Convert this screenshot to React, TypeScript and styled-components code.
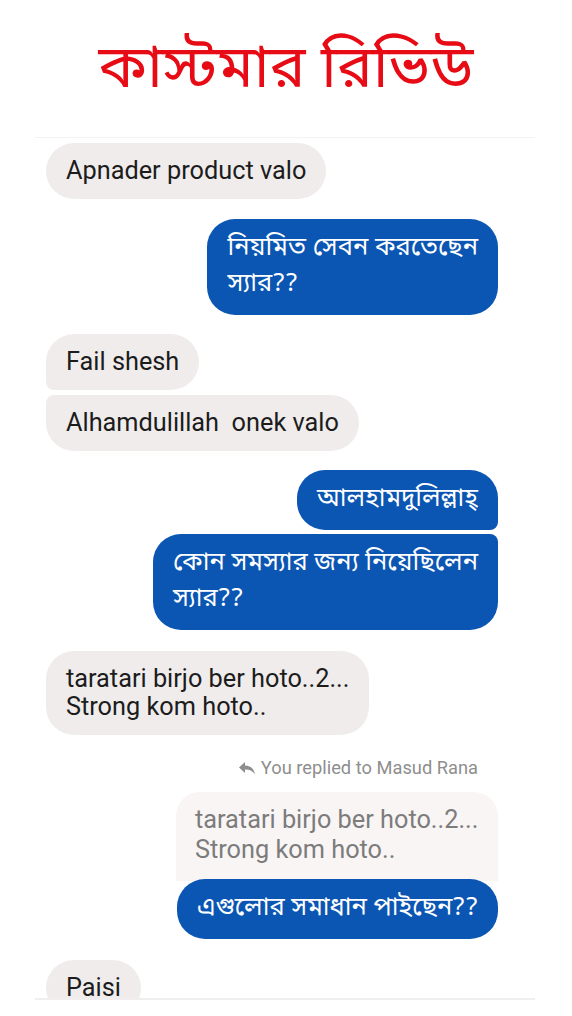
import React from "react";
import styled, { createGlobalStyle } from "styled-components";

const GlobalStyle = createGlobalStyle`
  body {
    margin: 0;
    background: #ffffff;
    font-family: Roboto, "Noto Sans", "Noto Sans Bengali", sans-serif;
  }
`;

const Page = styled.div`
  width: 572px;
  height: 1016px;
  overflow: hidden;
  background: #fff;
`;

const Title = styled.h1`
  margin: 0;
  height: 137px;
  padding-top: 32px;
  box-sizing: border-box;
  text-align: center;
  color: #e60b14;
  font-size: 60px;
  line-height: 80px;
  font-weight: 400;
  font-family: "Noto Sans Bengali", "Noto Sans", sans-serif;
`;

const Chat = styled.div`
  margin: 0 37px 0 35px;
  border-top: 1px solid #f3f3f3;
  border-bottom: 2px solid #f0eeee;
  padding: 5px 37px 0 11px;
  height: 855px;
  overflow: hidden;
  display: flex;
  flex-direction: column;
`;

const Row = styled.div<{ $mine?: boolean; $gap?: number }>`
  display: flex;
  justify-content: ${(p) => (p.$mine ? "flex-end" : "flex-start")};
  margin-top: ${(p) => p.$gap ?? 0}px;
`;

const Bubble = styled.div<{ $mine?: boolean; $corners?: string; $max?: number }>`
  background: ${(p) => (p.$mine ? "#0b56b3" : "#f0ecec")};
  color: ${(p) => (p.$mine ? "#fff" : "#1c1c1c")};
  border-radius: ${(p) => p.$corners ?? "28px"};
  padding: ${(p) => (p.$mine ? "12px 20px" : "14px 20px")};
  font-size: ${(p) => (p.$mine ? "25.5px" : "25.3px")};
  line-height: ${(p) => (p.$mine ? "36px" : "28px")};
  font-family: ${(p) =>
    p.$mine
      ? `"Noto Sans Bengali", "Noto Sans", sans-serif`
      : `Roboto, "Noto Sans", sans-serif`};
  white-space: pre-wrap;
  max-width: ${(p) => p.$max ?? 330}px;
`;

const ReplyLabel = styled.div`
  display: flex;
  justify-content: flex-end;
  align-items: center;
  gap: 5px;
  margin-top: 22px;
  padding-right: 20px;
  color: #8e8e8e;
  font-size: 18.3px;
  line-height: 22px;
  font-family: Roboto, sans-serif;
`;

const ReplyGroup = styled.div`
  display: flex;
  flex-direction: column;
  align-items: flex-end;
  margin-top: 13px;
`;

const Quote = styled.div`
  background: #f9f5f5;
  color: #7c7c7c;
  border-radius: 24px 24px 0 0;
  padding: 13px 18px 16px 19px;
  font-size: 25.3px;
  line-height: 30px;
  width: 322px;
  box-sizing: border-box;
  white-space: pre;
  font-family: Roboto, sans-serif;
`;

const Overlap = styled.div`
  margin-top: -2px;
`;

const ReplyIcon = () => (
  <svg width="18" height="14" viewBox="0 0 18 14">
    <path d="M7 1 L1 6.5 L7 12 L7 8.5 C11 8.3 14 9.5 17 13 C16 8 13 5 7 4.5 Z" fill="#8e8e8e" />
  </svg>
);

export default function App() {
  return (
    <Page>
      <GlobalStyle />
      <Title>কাস্টমার রিভিউ</Title>
      <Chat>
        <Row>
          <Bubble>Apnader product valo</Bubble>
        </Row>
        <Row $mine $gap={20}>
          <Bubble $mine>{"নিয়মিত সেবন করতেছেন\nস্যার??"}</Bubble>
        </Row>
        <Row $gap={19}>
          <Bubble $corners="28px 28px 28px 8px">Fail shesh</Bubble>
        </Row>
        <Row $gap={5}>
          <Bubble $corners="8px 28px 28px 28px">Alhamdulillah  onek valo</Bubble>
        </Row>
        <Row $mine $gap={19}>
          <Bubble $mine $corners="28px 28px 8px 28px">আলহামদুলিল্লাহ্</Bubble>
        </Row>
        <Row $mine $gap={4}>
          <Bubble $mine $corners="28px 8px 28px 28px" $max={362}>
            {"কোন সমস্যার জন্য নিয়েছিলেন\nস্যার??"}
          </Bubble>
        </Row>
        <Row $gap={21}>
          <Bubble>{"taratari birjo ber hoto..2...\nStrong kom hoto.."}</Bubble>
        </Row>
        <ReplyLabel>
          <ReplyIcon />
          You replied to Masud Rana
        </ReplyLabel>
        <ReplyGroup>
          <Quote>{"taratari birjo ber hoto..2...\nStrong kom hoto.."}</Quote>
          <Overlap>
            <Bubble $mine>এগুলোর সমাধান পাইছেন??</Bubble>
          </Overlap>
        </ReplyGroup>
        <Row $gap={21}>
          <Bubble>Paisi</Bubble>
        </Row>
      </Chat>
    </Page>
  );
}
